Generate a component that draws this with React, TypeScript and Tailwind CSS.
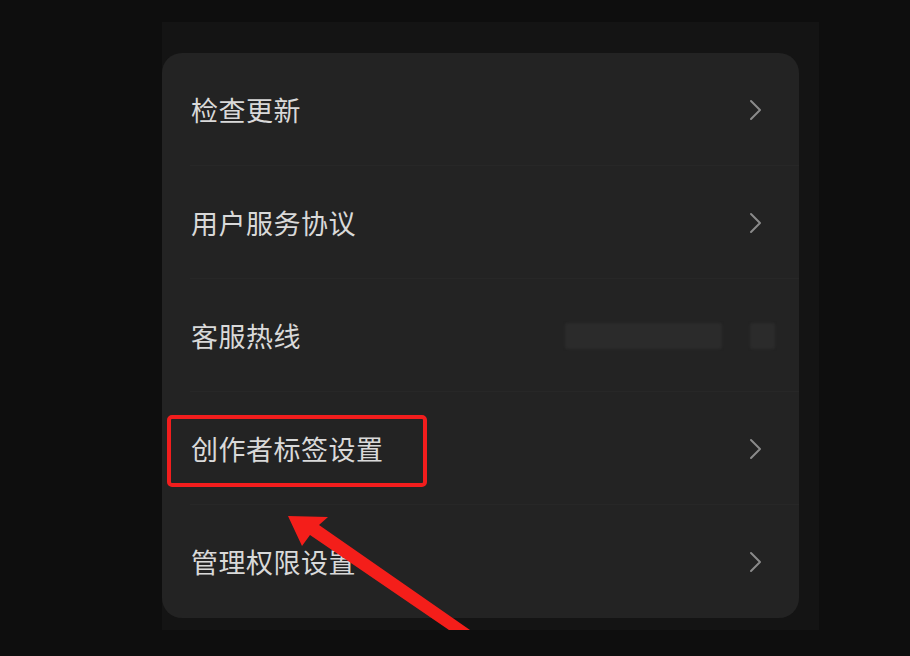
import React from "react";

const Chevron = () => (
  <svg width="14" height="22" viewBox="0 0 14 22" className="shrink-0">
    <polyline points="2,2 11,11 2,20" fill="none" stroke="#8a8a8a" strokeWidth="2" strokeLinecap="round" strokeLinejoin="round" />
  </svg>
);

const Row = ({ label, last, right }: { label: string; last?: boolean; right?: React.ReactNode }) => (
  <div className="relative flex h-[113px] items-center pl-[29px] pr-[36px]">
    <span className="text-[27px] leading-none tracking-[0.5px] text-[#d9d9d9]">{label}</span>
    <div className="ml-auto flex items-center">{right ?? <Chevron />}</div>
    {!last && <div className="absolute bottom-0 left-[28px] right-0 h-px bg-[#272727]" />}
  </div>
);

export default function App() {
  return (
    <div
      className="relative h-[656px] w-[910px] overflow-hidden bg-[#0e0e0e]"
      style={{ fontFamily: '"Noto Sans CJK SC", "Noto Sans", sans-serif' }}
    >
      <div className="ml-[162px] pt-[22px]">
        <div className="h-[608px] w-[657px] bg-[#141414] pt-[31px]">
          <div className="w-[637px] overflow-hidden rounded-[20px] bg-[#232323]">
            <Row label="检查更新" />
            <Row label="用户服务协议" />
            <Row
              label="客服热线"
              right={
                <div className="mr-[-12px] flex items-center gap-[28px]">
                  <div className="h-[26px] w-[157px] rounded-[2px] bg-[#2b2b2b] blur-[1px]" />
                  <div className="h-[26px] w-[25px] rounded-[2px] bg-[#2b2b2b] blur-[1px]" />
                </div>
              }
            />
            <Row label="创作者标签设置" />
            <Row label="管理权限设置" last />
          </div>
        </div>
      </div>

      <div className="absolute left-[167px] top-[415px] h-[72px] w-[260px] rounded-[5px] border-[4px] border-[#f21d1d]" />

      <svg className="absolute left-0 top-0" width="910" height="656" viewBox="0 0 910 656">
        <polygon
          points="288,516 328,517 319,525 470,630 449,630 310,535 302,546"
          fill="#f41e1a"
        />
      </svg>
    </div>
  );
}
